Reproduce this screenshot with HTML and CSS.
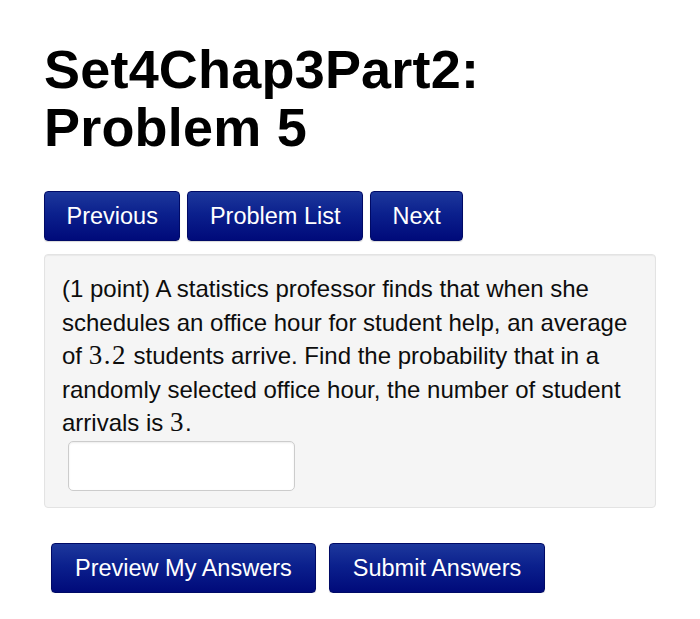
FILE: index.html
```html
<!DOCTYPE html>
<html lang="en">
<head>
<meta charset="utf-8">
<title>Set4Chap3Part2: Problem 5</title>
<link rel="stylesheet" href="styles.css">
</head>
<body>
<div class="page">
  <h1 class="title">Set4Chap3Part2: Problem 5</h1>
  <div class="nav">
    <button class="btn" type="button">Previous</button>
    <button class="btn" type="button">Problem List</button>
    <button class="btn" type="button">Next</button>
  </div>
  <div class="problem">
    <p class="statement">(1 point) A statistics professor finds that when she schedules an office hour for student help, an average of <span class="math">3.2</span> students arrive. Find the probability that in a randomly selected office hour, the number of student arrivals is <span class="math">3</span>.</p>
    <input class="answer" type="text" aria-label="answer">
  </div>
  <div class="actions">
    <button class="btn btn-wide" type="button">Preview My Answers</button>
    <button class="btn btn-wide" type="button">Submit Answers</button>
  </div>
</div>
</body>
</html>
```
FILE: styles.css
```css
html, body {
  margin: 0;
  padding: 0;
  background: #ffffff;
}

.page {
  width: 612px;
  padding: 40px 0 0 44px;
  font-family: "Liberation Sans", Arial, sans-serif;
  color: #111;
}

.title {
  margin: 0;
  font-size: 54px;
  line-height: 58px;
  font-weight: bold;
  color: #000;
  letter-spacing: 0.2px;
}

.nav {
  display: flex;
  gap: 7px;
  margin-top: 35px;
}

.btn {
  font-family: "Liberation Sans", Arial, sans-serif;
  font-size: 23.5px;
  line-height: 28px;
  height: 50px;
  padding: 10px 21.5px;
  color: #ffffff;
  border: 1px solid #000a66;
  border-radius: 4px;
  background: linear-gradient(to bottom, #1d389c 0%, #0b208d 45%, #000a7a 100%);
  box-shadow: 0 1px 1px rgba(0, 0, 0, 0.15);
  cursor: pointer;
}

.btn-wide {
  padding: 10px 23px;
}

.problem {
  margin-top: 13px;
  background: #f5f5f5;
  border: 1px solid #e3e3e3;
  border-radius: 4px;
  box-shadow: inset 0 1px 1px rgba(0, 0, 0, 0.05);
  padding: 17px 17px 16px 17px;
}

.statement {
  margin: 0;
  font-size: 24px;
  line-height: 33.6px;
  color: #0d0d0d;
}

.math {
  display: inline-block;
  font-family: "Liberation Serif", "Times New Roman", serif;
  font-size: 27px;
  line-height: 24px;
  letter-spacing: 1.5px;
}

.answer {
  display: block;
  box-sizing: border-box;
  width: 227px;
  height: 50px;
  margin: 1px 0 0 6px;
  background: #ffffff;
  border: 1px solid #cccccc;
  border-radius: 5px;
  box-shadow: inset 0 1px 2px rgba(0, 0, 0, 0.08);
}

.actions {
  display: flex;
  gap: 13px;
  margin: 35px 0 0 7px;
}
```
